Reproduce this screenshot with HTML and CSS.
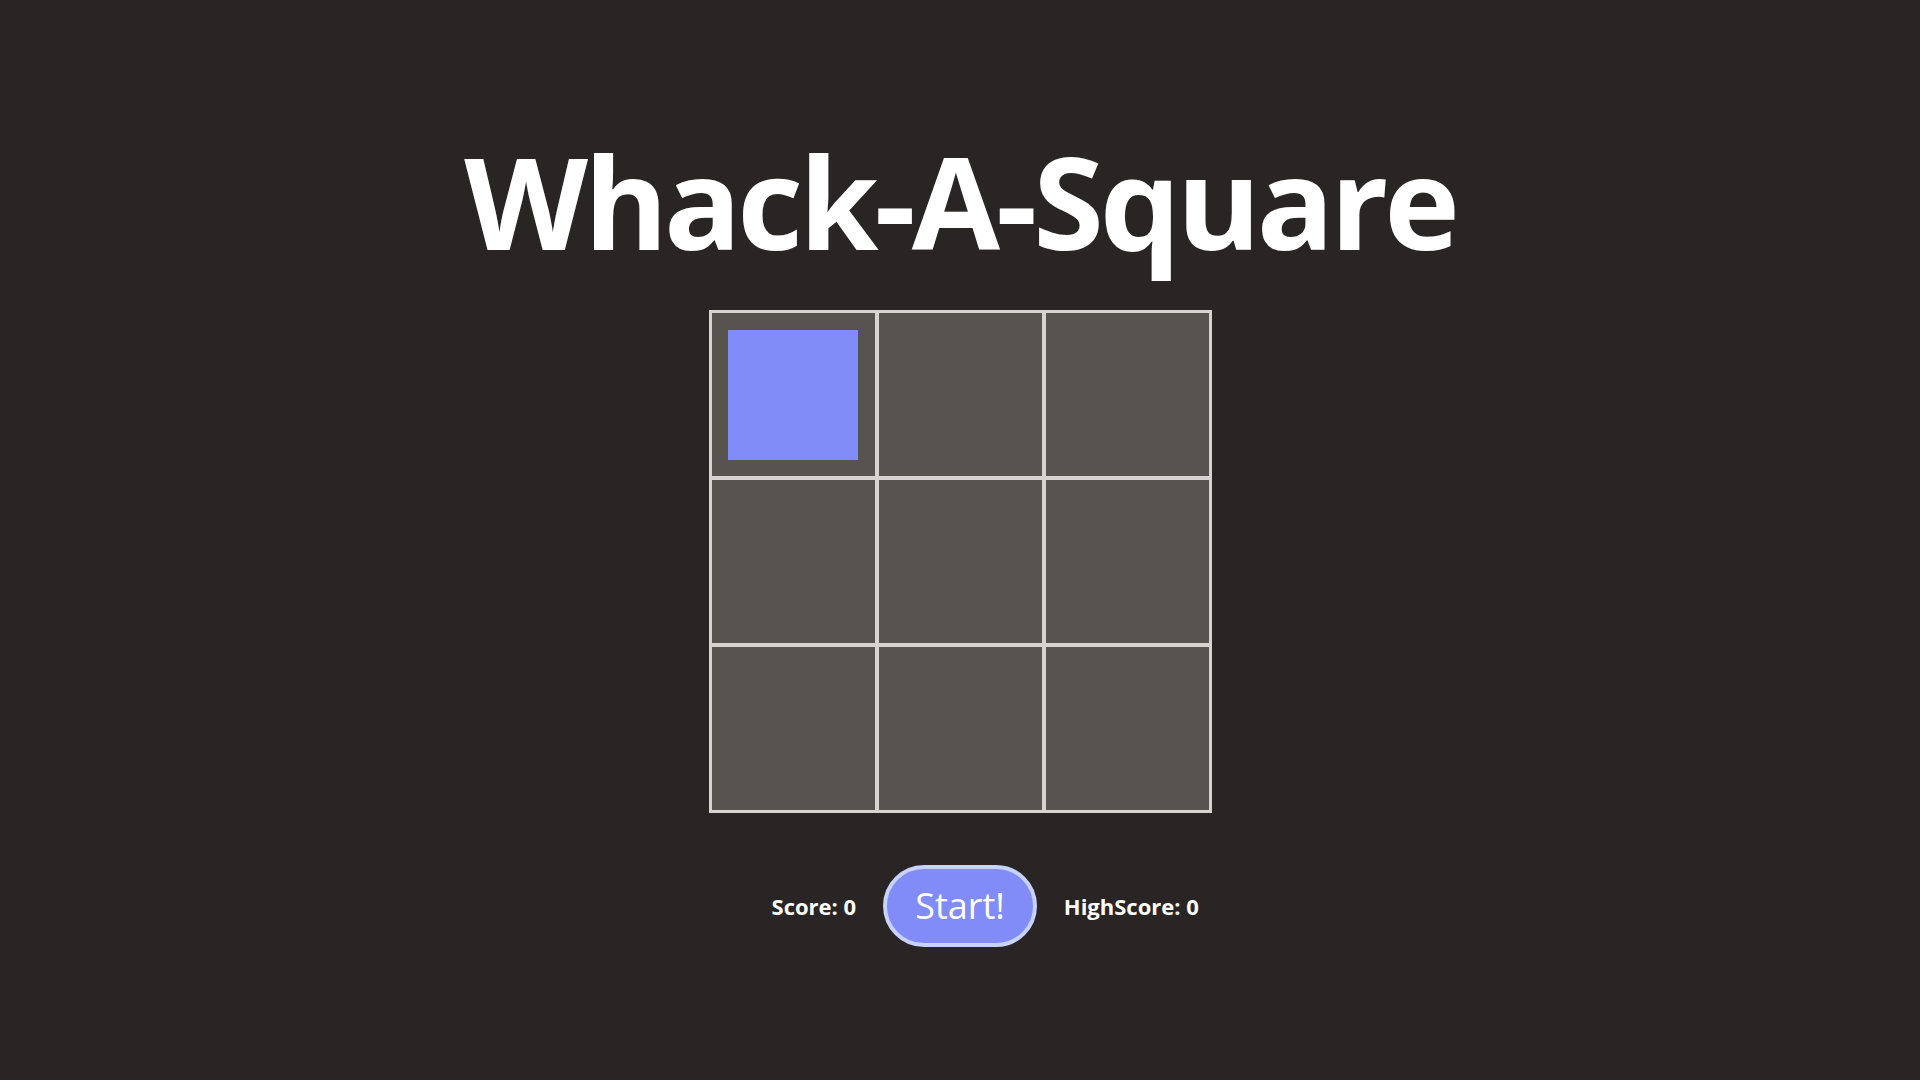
FILE: index.html
```html
<!DOCTYPE html>
<html lang="en">
<head>
<meta charset="utf-8">
<title>Whack-A-Square</title>
<link rel="stylesheet" href="styles.css">
</head>
<body>
<main class="app">
  <h1 class="title">Whack-A-Square</h1>
  <div class="board">
    <div class="cell"><div class="mole"></div></div>
    <div class="cell"></div>
    <div class="cell"></div>
    <div class="cell"></div>
    <div class="cell"></div>
    <div class="cell"></div>
    <div class="cell"></div>
    <div class="cell"></div>
    <div class="cell"></div>
  </div>
  <div class="controls">
    <span class="score left">Score: 0</span>
    <button class="start">Start!</button>
    <span class="score right">HighScore: 0</span>
  </div>
</main>
</body>
</html>
```
FILE: styles.css
```css
html, body {
  margin: 0;
  padding: 0;
  background: #292524;
  color: #ffffff;
  font-family: "Open Sans", "Noto Sans", sans-serif;
}
.app {
  display: flex;
  flex-direction: column;
  align-items: center;
  padding-top: 137px;
}
.title {
  margin: 0;
  font-size: 128px;
  line-height: 1;
  font-weight: 700;
  letter-spacing: -4px;
}
.board {
  margin-top: 45px;
  display: grid;
  grid-template-columns: repeat(3, 167px);
  grid-template-rows: repeat(3, 167px);
  border: 1px solid #d6d3d1;
}
.cell {
  box-sizing: border-box;
  border: 2px solid #d6d3d1;
  background: #57534e;
  display: flex;
  align-items: center;
  justify-content: center;
}
.mole {
  width: 130px;
  height: 130px;
  background: #818cf8;
}
.controls {
  margin-top: 52px;
  display: grid;
  grid-template-columns: 1fr auto 1fr;
  align-items: center;
  column-gap: 27px;
  width: 100%;
}
.score {
  font-weight: 700;
  font-size: 22px;
}
.left { justify-self: end; }
.right { justify-self: start; }
.start {
  font-family: "Open Sans", "Noto Sans", sans-serif;
  font-size: 36px;
  line-height: 50px;
  color: #ffffff;
  background: #818cf8;
  border: 4px solid #c7d2fe;
  border-radius: 9999px;
  padding: 12px 28px;
  cursor: pointer;
}
```
